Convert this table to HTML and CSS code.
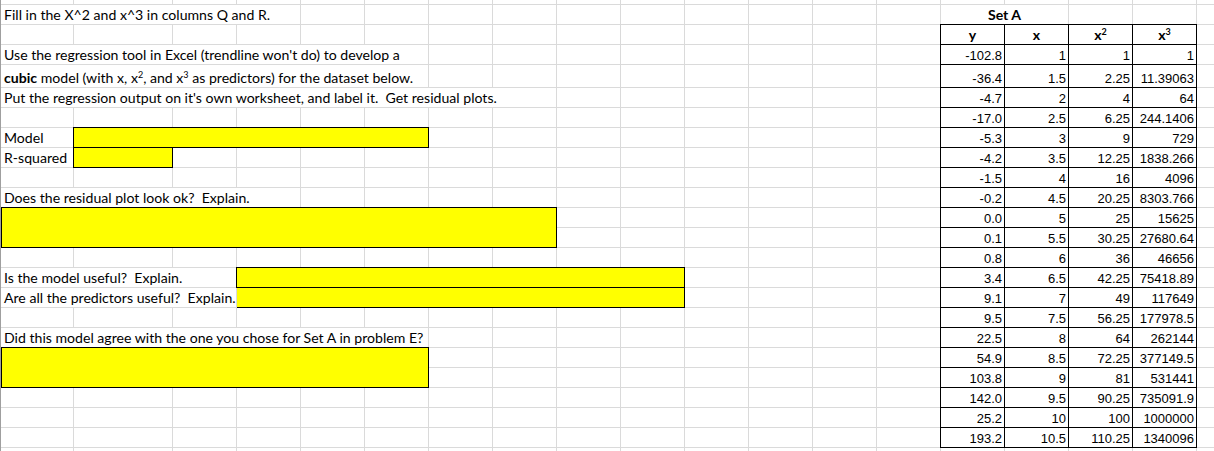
FILE: index.html
```html
<!DOCTYPE html>
<html lang="en">
<head>
<meta charset="utf-8">
<title>Set A – cubic regression</title>
<link rel="stylesheet" href="styles.css">
</head>
<body>
<div class="sheet">
  <div class="t intro"><span>Fill in the X^2 and x^3 in columns Q and R.</span></div>
  <div class="t set-title"><span>Set A</span></div>

  <div class="t use-line"><span>Use the regression tool in Excel (trendline won't do) to develop a</span></div>
  <div class="t cubic-line"><span><b>cubic</b> model (with x, x<sup>2</sup>, and x<sup>3</sup> as predictors) for the dataset below.</span></div>
  <div class="t put-line"><span>Put the regression output on it's own worksheet, and label it.  Get residual plots.</span></div>

  <div class="t model-label"><span>Model</span></div>
  <div class="box box-model"></div>
  <div class="t r2-label"><span>R-squared</span></div>
  <div class="box box-r2"></div>

  <div class="t resid-q"><span>Does the residual plot look ok?  Explain.</span></div>
  <div class="box box-first box-resid"></div>

  <div class="t useful-q"><span>Is the model useful?  Explain.</span></div>
  <div class="box box-useful"></div>
  <div class="t pred-q"><span>Are all the predictors useful?  Explain.</span></div>
  <div class="box box-pred"></div>

  <div class="t agree-q"><span>Did this model agree with the one you chose for Set A in problem E?</span></div>
  <div class="box box-first box-agree"></div>

  <div class="data">
    <div class="h"><span>y</span></div><div class="h"><span>x</span></div><div class="h"><span>x<sup>2</sup></span></div><div class="h"><span>x<sup>3</sup></span></div>
    <div class="n">-102.8</div><div class="n">1</div><div class="n">1</div><div class="n">1</div>
    <div class="n">-36.4</div><div class="n">1.5</div><div class="n">2.25</div><div class="n">11.39063</div>
    <div class="n">-4.7</div><div class="n">2</div><div class="n">4</div><div class="n">64</div>
    <div class="n">-17.0</div><div class="n">2.5</div><div class="n">6.25</div><div class="n">244.1406</div>
    <div class="n">-5.3</div><div class="n">3</div><div class="n">9</div><div class="n">729</div>
    <div class="n">-4.2</div><div class="n">3.5</div><div class="n">12.25</div><div class="n">1838.266</div>
    <div class="n">-1.5</div><div class="n">4</div><div class="n">16</div><div class="n">4096</div>
    <div class="n">-0.2</div><div class="n">4.5</div><div class="n">20.25</div><div class="n">8303.766</div>
    <div class="n">0.0</div><div class="n">5</div><div class="n">25</div><div class="n">15625</div>
    <div class="n">0.1</div><div class="n">5.5</div><div class="n">30.25</div><div class="n">27680.64</div>
    <div class="n">0.8</div><div class="n">6</div><div class="n">36</div><div class="n">46656</div>
    <div class="n">3.4</div><div class="n">6.5</div><div class="n">42.25</div><div class="n">75418.89</div>
    <div class="n">9.1</div><div class="n">7</div><div class="n">49</div><div class="n">117649</div>
    <div class="n">9.5</div><div class="n">7.5</div><div class="n">56.25</div><div class="n">177978.5</div>
    <div class="n">22.5</div><div class="n">8</div><div class="n">64</div><div class="n">262144</div>
    <div class="n">54.9</div><div class="n">8.5</div><div class="n">72.25</div><div class="n">377149.5</div>
    <div class="n">103.8</div><div class="n">9</div><div class="n">81</div><div class="n">531441</div>
    <div class="n">142.0</div><div class="n">9.5</div><div class="n">90.25</div><div class="n">735091.9</div>
    <div class="n">25.2</div><div class="n">10</div><div class="n">100</div><div class="n">1000000</div>
    <div class="n">193.2</div><div class="n">10.5</div><div class="n">110.25</div><div class="n">1340096</div>
  </div>
</div>
</body>
</html>
```
FILE: styles.css
```css
* { box-sizing: border-box; }

html, body {
  margin: 0;
  padding: 0;
  background: #fff;
  overflow: hidden;
}

.sheet {
  width: 1214px;
  height: 451px;
  overflow: hidden;
  display: grid;
  grid-template-columns: 73px 99px repeat(17, 64px);
  grid-template-rows: 5px 20px 20px 20px 23px repeat(18, 20px) 1fr;
  border-left: 1px solid #9f9f9f;
  background-color: #fff;
  background-origin: border-box;
  background-image:
    linear-gradient(to right, transparent 73px, #dadada 73px, #dadada 74px, transparent 74px, transparent 172px, #dadada 172px, #dadada 173px, transparent 173px),
    repeating-linear-gradient(to right, transparent 0, transparent 63px, #dadada 63px, #dadada 64px),
    linear-gradient(to bottom, transparent 4px, #dadada 4px, #dadada 5px, transparent 5px, transparent 24px, #dadada 24px, #dadada 25px, transparent 25px, transparent 44px, #dadada 44px, #dadada 45px, transparent 45px, transparent 64px, #dadada 64px, #dadada 65px, transparent 65px, transparent 87px, #dadada 87px, #dadada 88px, transparent 88px),
    repeating-linear-gradient(to bottom, transparent 0, transparent 19px, #dadada 19px, #dadada 20px);
  background-position: 0 0, 173px 0, 0 0, 0 88px;
  background-size: 100% 100%, calc(100% - 173px) 100%, 100% 100%, 100% calc(100% - 88px);
  background-repeat: no-repeat;
  font-family: Lato, "Open Sans", sans-serif;
  font-size: 14.1px;
  color: #000;
}

/* text cells (text overflows across the cells it spans, hiding the gridlines) */
.t {
  background: #fff;
  margin: 0 1px 1px 0;
  display: flex;
  align-items: flex-end;
  padding: 0 0 1px 3px;
  line-height: 16px;
  white-space: pre;
}

.t sup, .h sup {
  font-size: 9px;
  line-height: 0;
  vertical-align: 5px;
}

.intro      { grid-row: 2; grid-column: 1 / 5; }
.set-title  { grid-row: 2; grid-column: 15 / 17; justify-content: center; font-weight: bold; padding-left: 0; }
.use-line   { grid-row: 4; grid-column: 1 / 7; }
.cubic-line { grid-row: 5; grid-column: 1 / 7; }
.put-line   { grid-row: 6; grid-column: 1 / 9; }
.model-label{ grid-row: 8; grid-column: 1 / 2; }
.r2-label   { grid-row: 9; grid-column: 1 / 2; }
.resid-q    { grid-row: 11; grid-column: 1 / 5; }
.useful-q   { grid-row: 15; grid-column: 1 / 4; }
.pred-q     { grid-row: 16; grid-column: 1 / 4; }
.agree-q    { grid-row: 18; grid-column: 1 / 7; }

/* yellow answer boxes */
.box {
  background: #ffff00;
  margin: 0 1px 1px 0;
  box-shadow: 0 0 0 1px #000;
}
.box-first { box-shadow: 0 0 0 1px #000, inset 1px 0 0 #000; }

.box-model  { grid-row: 8; grid-column: 2 / 7; }
.box-r2     { grid-row: 9; grid-column: 2 / 3; }
.box-resid  { grid-row: 12 / 14; grid-column: 1 / 9; }
.box-useful { grid-row: 15; grid-column: 4 / 11; }
.box-pred   { grid-row: 16; grid-column: 4 / 11; box-shadow: 1px 0 0 #000, 0 1px 0 #000, 1px 1px 0 #000; }
.box-agree  { grid-row: 19 / 21; grid-column: 1 / 7; }

/* data table */
.data {
  grid-row: 3 / 24;
  grid-column: 15 / 19;
  margin: 0 1px 1px 0;
  display: grid;
  grid-template-columns: repeat(4, 1fr);
  grid-template-rows: 19px 19px 22px repeat(18, 19px);
  gap: 1px;
  background: #000;
  box-shadow: 0 0 0 1px #000;
}

.h, .n {
  background: #fff;
  display: flex;
  align-items: flex-end;
  white-space: pre;
}

.h {
  justify-content: center;
  font-weight: bold;
  line-height: 16px;
  padding-bottom: 1px;
}

.n {
  justify-content: flex-end;
  font-family: "Liberation Sans", Arial, sans-serif;
  font-size: 13px;
  line-height: 15px;
  padding: 0 2px 1px 0;
}
```
